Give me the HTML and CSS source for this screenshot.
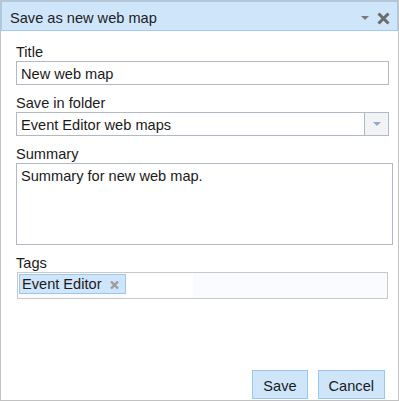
FILE: index.html
```html
<!DOCTYPE html>
<html lang="en">
<head>
    <meta charset="UTF-8">
    <meta name="viewport" content="width=device-width, initial-scale=1.0">
    <title>Save as new web map</title>
    <link rel="stylesheet" href="styles.css">
</head>
<body>
    <div class="dialog">
        <div class="titlebar">
            <span class="title">Save as new web map</span>
            <svg class="menu-icon" width="8" height="4" viewBox="0 0 8 4"><polygon points="0,0 8,0 4,4" fill="#7a7a7a"/></svg>
            <svg class="close-icon" width="13" height="13" viewBox="0 0 13 13">
                <path d="M1.5 1.5 L11.5 11.5 M11.5 1.5 L1.5 11.5" stroke="#6b6b6b" stroke-width="3" fill="none"/>
            </svg>
        </div>
        <div class="content">
            <label class="field-label" for="mapTitle">Title</label>
            <input class="text-box" id="mapTitle" type="text" value="New web map">

            <div class="field-label">Save in folder</div>
            <div class="select-box">
                <span class="select-value">Event Editor web maps</span>
                <span class="select-arrow">
                    <svg width="8" height="4" viewBox="0 0 8 4"><polygon points="0,0 8,0 4,4" fill="#94a9cc"/></svg>
                </span>
            </div>

            <label class="field-label" for="mapSummary">Summary</label>
            <textarea class="text-area" id="mapSummary">Summary for new web map.</textarea>

            <div class="field-label">Tags</div>
            <div class="tag-box">
                <span class="tag">Event Editor
                    <svg class="tag-remove" width="9" height="8" viewBox="0 0 9 8">
                        <path d="M1 0.5 L8 7.5 M8 0.5 L1 7.5" stroke="#9c9c9c" stroke-width="2.4" fill="none"/>
                    </svg>
                </span>
                <span class="tag-input"></span>
            </div>
        </div>
        <div class="footer">
            <button class="btn">Save</button>
            <button class="btn">Cancel</button>
        </div>
    </div>
</body>
</html>
```

FILE: styles.css
```css
body {
    margin: 0;
    font-family: "Liberation Sans", Arial, sans-serif;
    font-size: 14.6px;
    color: #1a1a1a;
    background: #fff;
}
.dialog {
    width: 399px;
    height: 401px;
    box-sizing: border-box;
    border: 1px solid #c3c3c3;
    display: flex;
    flex-direction: column;
}
.titlebar {
    height: 30px;
    box-sizing: border-box;
    border: 1px solid #a3cbf0;
    background-color: #cfe5fa;
    display: flex;
    align-items: center;
    padding: 4px 7px 0 8px;
}
.title {
    flex: 1;
    line-height: 17px;
    color: #222;
}
.menu-icon {
    margin-right: 8px;
}
.content {
    flex: 1;
    padding: 13px 9px 0 15px;
}
.field-label {
    display: block;
    line-height: 17px;
}
.text-box {
    display: block;
    width: 100%;
    height: 24px;
    box-sizing: border-box;
    margin: 0 0 10px 0;
    border: 1px solid #b3b8c6;
    padding: 2px 4px 0 4px;
    font: inherit;
    line-height: 20px;
    color: #1a1a1a;
    outline: none;
}
.select-box {
    height: 24px;
    box-sizing: border-box;
    margin-bottom: 10px;
    border: 1px solid #b3b8c6;
    display: flex;
}
.select-value {
    flex: 1;
    padding: 2px 4px 0 4px;
    line-height: 20px;
}
.select-arrow {
    width: 24px;
    box-sizing: border-box;
    border-left: 1px solid #b3b8c6;
    background-color: #f2f3f5;
    display: flex;
    align-items: center;
    justify-content: center;
}
.text-area {
    display: block;
    width: 377px;
    height: 82px;
    box-sizing: border-box;
    margin: 0 0 10px 0;
    border: 1px solid #b3b8c6;
    padding: 2px 4px;
    font: inherit;
    line-height: 20px;
    color: #1a1a1a;
    resize: none;
    outline: none;
}
.tag-box {
    width: 371px;
    height: 27px;
    box-sizing: border-box;
    margin-left: 1px;
    border: 1px solid #c9c9c9;
    background-color: #f9fbfe;
    display: flex;
    align-items: flex-start;
}
.tag {
    margin: 1px 0 0 1px;
    height: 20px;
    box-sizing: border-box;
    border: 1px solid #9bc7ee;
    background-color: #cfe5fa;
    padding: 0 6px 0 2px;
    line-height: 18px;
    display: flex;
    align-items: center;
}
.tag-remove {
    margin-left: 8px;
    margin-top: 1px;
}
.tag-input {
    align-self: stretch;
    width: 67px;
    background-color: #fff;
}
.footer {
    display: flex;
    justify-content: flex-end;
    gap: 10px;
    padding: 0 13px 1px 0;
}
.btn {
    height: 29px;
    box-sizing: border-box;
    border: 1px solid #9bc7ee;
    background-color: #cfe5fa;
    padding: 3px 10px 0 10px;
    margin: 0;
    font: inherit;
    line-height: 24px;
    color: #1a1a1a;
    border-radius: 0;
}
```
